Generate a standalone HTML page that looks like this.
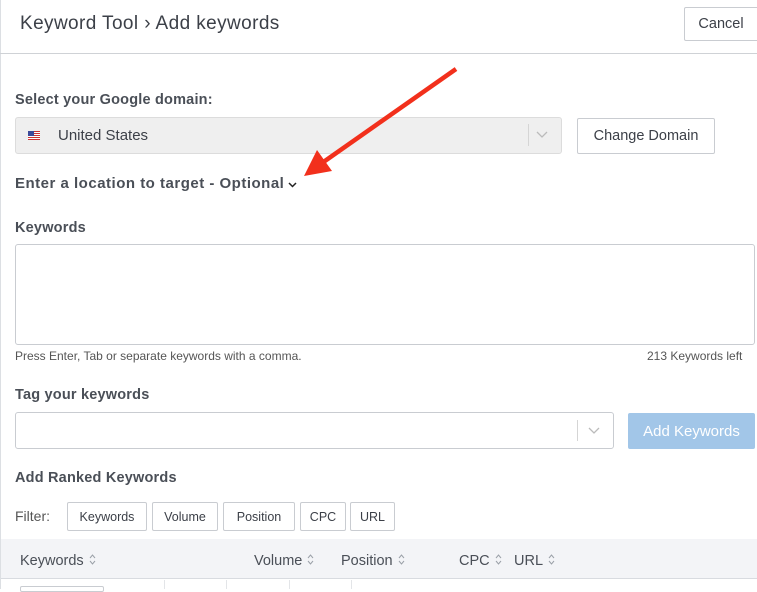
<!DOCTYPE html>
<html><head><style>
*{box-sizing:border-box;margin:0;padding:0}
body{width:757px;height:589px;overflow:hidden;background:#fff;font-family:"Liberation Sans",sans-serif;color:#454a52;position:relative}
.a{position:absolute}
.lbl{font-weight:bold;font-size:14px;color:#4a4f57;white-space:nowrap}
.btn{position:absolute;border:1px solid #c9ccd1;border-radius:2px;background:#fff;font-size:14.5px;color:#3c4048;display:flex;align-items:center;justify-content:center}
.fb{position:absolute;top:502px;height:29px;border:1px solid #c9ccd1;border-radius:2px;font-size:12.5px;display:flex;align-items:center;justify-content:center;color:#3c4048}
.th{position:absolute;top:553px;font-size:14.5px;color:#4a4f57}
.th svg{margin-left:5px}
</style></head><body>
<div class="a" style="left:0;top:0;width:1px;height:589px;background:#dcdfe3"></div>
<div class="a" style="left:20px;top:13px;font-size:19px;color:#3c4048;letter-spacing:0.4px;white-space:nowrap">Keyword Tool › Add keywords</div>
<div class="btn" style="left:684px;top:7px;width:80px;height:34px;padding-right:6px">Cancel</div>
<div class="a" style="left:0;top:53px;width:757px;height:1px;background:#cfd2d6"></div>
<div class="a lbl" style="left:15px;top:92px;font-size:14.5px;letter-spacing:0.2px">Select your Google domain:</div>
<div class="a" style="left:15px;top:117px;width:547px;height:37px;background:#efefef;border:1px solid #dcdcdc;border-radius:3px"></div>
<div class="a" style="left:28px;top:131px;width:12px;height:9px;background:repeating-linear-gradient(#c33 0 1px,#fff 1px 2px)"><div style="width:6px;height:5px;background:#3b4a9a"></div></div>
<div class="a" style="left:58px;top:127px;font-size:15px;color:#3c4048">United States</div>
<div class="a" style="left:528px;top:124px;width:1px;height:22px;background:#d5d5d5"></div>
<svg class="a" style="left:536px;top:131px" width="12" height="8"><path d="M1 1L6 6L11 1" fill="none" stroke="#bbb" stroke-width="1.3"/></svg>
<div class="btn" style="left:577px;top:118px;width:138px;height:36px">Change Domain</div>
<div class="a lbl" style="left:15px;top:175px;font-size:15px;letter-spacing:0.5px">Enter a location to target - Optional</div>
<svg class="a" style="left:288px;top:182px" width="9" height="6"><path d="M1 1L4.5 4.5L8 1" fill="none" stroke="#222" stroke-width="1.5"/></svg>
<div class="a lbl" style="left:15px;top:220px;font-size:14.5px;letter-spacing:0.2px">Keywords</div>
<div class="a" style="left:15px;top:244px;width:740px;height:101px;border:1px solid #c9ccd1;border-radius:3px"></div>
<div class="a" style="left:15px;top:349px;font-size:12px;color:#555">Press Enter, Tab or separate keywords with a comma.</div>
<div class="a" style="left:647px;top:349px;font-size:12px;color:#555;white-space:nowrap">213 Keywords left</div>
<div class="a lbl" style="left:15px;top:387px;font-size:14.5px;letter-spacing:0.2px">Tag your keywords</div>
<div class="a" style="left:15px;top:412px;width:599px;height:37px;border:1px solid #c9ccd1;border-radius:3px"></div>
<div class="a" style="left:577px;top:420px;width:1px;height:21px;background:#d5d5d5"></div>
<svg class="a" style="left:588px;top:427px" width="12" height="8"><path d="M1 1L6 6L11 1" fill="none" stroke="#bbb" stroke-width="1.3"/></svg>
<div class="a" style="left:628px;top:413px;width:127px;height:36px;background:#a2c6e8;border-radius:2px;color:#fff;font-size:15px;display:flex;align-items:center;justify-content:center">Add Keywords</div>
<div class="a lbl" style="left:15px;top:470px;font-size:14.5px;letter-spacing:0.2px">Add Ranked Keywords</div>
<div class="a" style="left:15px;top:508px;font-size:14px;color:#555">Filter:</div>
<div class="fb" style="left:67px;width:80px">Keywords</div>
<div class="fb" style="left:152px;width:66px">Volume</div>
<div class="fb" style="left:223px;width:72px">Position</div>
<div class="fb" style="left:300px;width:46px">CPC</div>
<div class="fb" style="left:350px;width:45px">URL</div>
<div class="a" style="left:1px;top:539px;width:756px;height:40px;background:#f3f4f7;border-bottom:1px solid #d8dbe0"></div>
<div class="th" style="left:20px">Keywords<svg width="7" height="11"><path d="M1 4L3.5 1L6 4M1 7L3.5 10L6 7" fill="none" stroke="#9aa0a8"/></svg></div>
<div class="th" style="left:254px">Volume<svg width="7" height="11"><path d="M1 4L3.5 1L6 4M1 7L3.5 10L6 7" fill="none" stroke="#9aa0a8"/></svg></div>
<div class="th" style="left:341px">Position<svg width="7" height="11"><path d="M1 4L3.5 1L6 4M1 7L3.5 10L6 7" fill="none" stroke="#9aa0a8"/></svg></div>
<div class="th" style="left:459px">CPC<svg width="7" height="11"><path d="M1 4L3.5 1L6 4M1 7L3.5 10L6 7" fill="none" stroke="#9aa0a8"/></svg></div>
<div class="th" style="left:514px">URL<svg width="7" height="11"><path d="M1 4L3.5 1L6 4M1 7L3.5 10L6 7" fill="none" stroke="#9aa0a8"/></svg></div>
<div class="a" style="left:164px;top:580px;width:1px;height:9px;background:#e3e5e8"></div>
<div class="a" style="left:226px;top:580px;width:1px;height:9px;background:#e3e5e8"></div>
<div class="a" style="left:289px;top:580px;width:1px;height:9px;background:#e3e5e8"></div>
<div class="a" style="left:351px;top:580px;width:1px;height:9px;background:#e3e5e8"></div>
<div class="a" style="left:20px;top:586px;width:84px;height:6px;border:1px solid #c9ccd1;border-radius:2px"></div>
<svg class="a" style="left:0;top:0" width="757" height="589"><line x1="456" y1="69" x2="322" y2="163" stroke="#f2301c" stroke-width="4.5"/><polygon points="304,176 317,150 332,171" fill="#f2301c"/></svg>
</body></html>
